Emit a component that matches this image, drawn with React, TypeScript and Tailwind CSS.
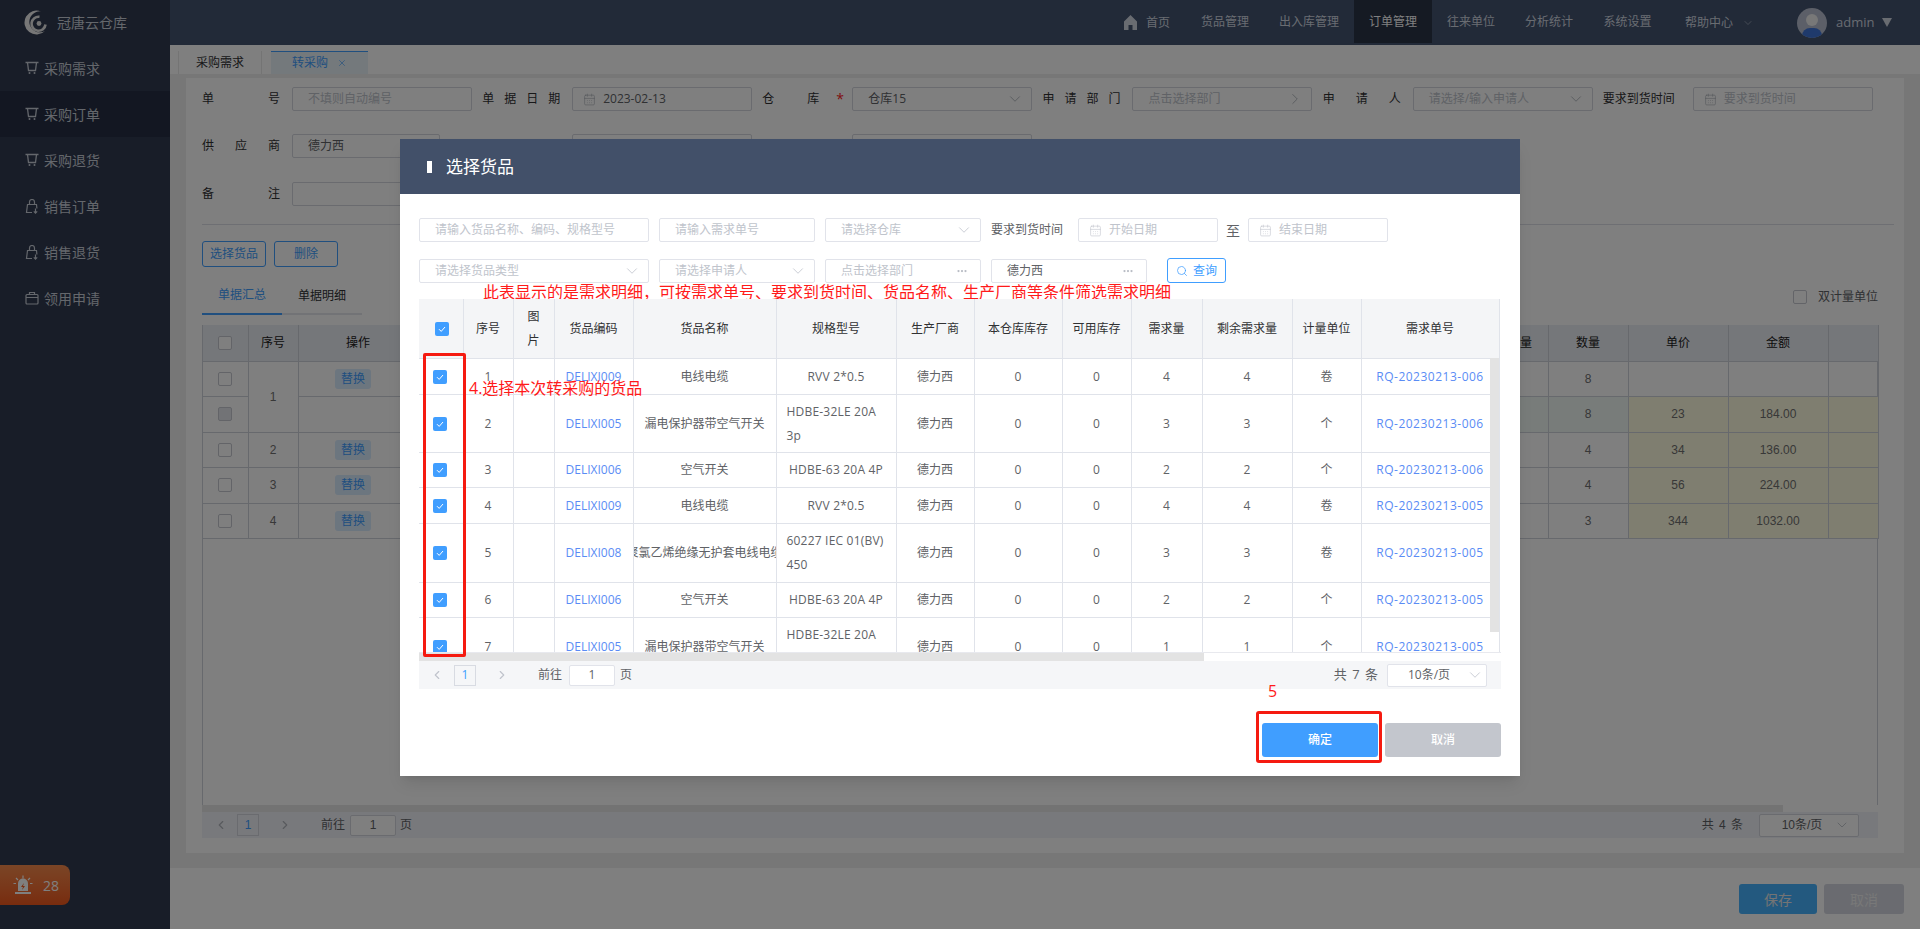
import { CalendarDays, ChevronDown, ChevronLeft, ChevronRight, MoreHorizontal, Search, X } from "lucide-react";
import type { ReactNode } from "react";

const SIDE = [
  { label: "采购需求", icon: "cart" },
  { label: "采购订单", icon: "cart", active: true },
  { label: "采购退货", icon: "cart" },
  { label: "销售订单", icon: "bag" },
  { label: "销售退货", icon: "bag" },
  { label: "领用申请", icon: "case" },
];

const NAV = [
  { label: "货品管理", w: "w-[78px]" },
  { label: "出入库管理", w: "w-[90px]" },
  { label: "订单管理", w: "w-[78px]", active: true },
  { label: "往来单位", w: "w-[78px]" },
  { label: "分析统计", w: "w-[78px]" },
  { label: "系统设置", w: "w-[79px]" },
];

const GOODS = [
  { no: 1, code: "DELIXI009", name: "电线电缆", spec: "RVV 2*0.5", need: 4, unit: "卷", bill: "RQ-20230213-006", h: "h-[36px]" },
  { no: 2, code: "DELIXI005", name: "漏电保护器带空气开关", spec: "HDBE-32LE 20A 3p", need: 3, unit: "个", bill: "RQ-20230213-006", h: "h-[58px]" },
  { no: 3, code: "DELIXI006", name: "空气开关", spec: "HDBE-63 20A 4P", need: 2, unit: "个", bill: "RQ-20230213-006", h: "h-[35px]" },
  { no: 4, code: "DELIXI009", name: "电线电缆", spec: "RVV 2*0.5", need: 4, unit: "卷", bill: "RQ-20230213-005", h: "h-[36px]" },
  { no: 5, code: "DELIXI008", name: "聚氯乙烯绝缘无护套电线电缆", spec: "60227 IEC 01(BV) 450", need: 3, unit: "卷", bill: "RQ-20230213-005", h: "h-[59px]" },
  { no: 6, code: "DELIXI006", name: "空气开关", spec: "HDBE-63 20A 4P", need: 2, unit: "个", bill: "RQ-20230213-005", h: "h-[35px]" },
  { no: 7, code: "DELIXI005", name: "漏电保护器带空气开关", spec: "HDBE-32LE 20A 3p", need: 1, unit: "个", bill: "RQ-20230213-005", h: "h-[59px]" },
];

const GOODS_HEAD = ["序号", "图片", "货品编码", "货品名称", "规格型号", "生产厂商", "本仓库库存", "可用库存", "需求量", "剩余需求量", "计量单位", "需求单号"];

function SideIcon({ kind }: { kind: string }) {
  if (kind === "cart") {
    return (
      <svg width="14" height="14" viewBox="0 0 14 14" fill="none" stroke="currentColor" strokeWidth="1.3">
        <path d="M0.5 1.500h13M2.500 1.500l1 8h7l1-8" />
        <circle cx="4.500" cy="12" r="1" fill="currentColor" stroke="none" />
        <circle cx="9.500" cy="12" r="1" fill="currentColor" stroke="none" />
      </svg>
    );
  }
  if (kind === "bag") {
    return (
      <svg width="14" height="15" viewBox="0 0 14 15" fill="none" stroke="currentColor" strokeWidth="1.2">
        <path d="M7 13.500H1.500l1-8h9l.4 4M4.500 5.500V3a2.500 2.500 0 015 0v2.500" />
        <path d="M10.500 9.500v4.500M8.800 12.400l1.700 1.700 1.700-1.700" />
      </svg>
    );
  }
  return (
    <svg width="14" height="14" viewBox="0 0 14 14" fill="none" stroke="currentColor" strokeWidth="1.2">
      <rect x="1" y="3.500" width="12" height="9.500" rx="1" />
      <path d="M1 6.500h12M4.500 3.500V1.500h5v2" />
    </svg>
  );
}

function Logo() {
  return (
    <svg width="25" height="25" viewBox="0 0 25 25">
      <path fill="#eeeeee" d="M17 1.400A12 12 0 1 0 21 21A10.500 10.500 0 1 1 17 1.400Z" />
      <path d="M21.500 14.500A7 7 0 1 1 15.500 6.800" fill="none" stroke="#e4e4e4" strokeWidth="2.600" />
      <circle cx="15" cy="13.500" r="2.400" fill="#e4e4e4" />
    </svg>
  );
}

function Sidebar() {
  return (
    <aside className="relative flex h-full w-[170px] shrink-0 flex-col bg-[#303a50] text-[14px] text-[#c8ced8]">
      <div className="flex h-[45px] items-center pl-[24px]">
        <Logo />
        <span className="ml-[8px]">冠唐云仓库</span>
      </div>
      {SIDE.map((s) => (
        <div key={s.label} className={`flex h-[46px] items-center pl-[25px] ${s.active ? "bg-[#262e44]" : ""}`}>
          <SideIcon kind={s.icon} />
          <span className="ml-[5px]">{s.label}</span>
        </div>
      ))}
      <div className="absolute left-0 top-[865px] flex h-[40px] w-[70px] items-center rounded-r-[8px] bg-gradient-to-b from-[#f58a4c] to-[#f0581c] pl-[13px] text-white">
        <svg width="20" height="20" viewBox="0 0 20 20" fill="#fff">
          <path d="M5 8.500a5 5 0 0110 0V16H5Z" />
          <path d="M2 17h16v2H2Z" />
          <path d="M10 .5v3M3 3l2 2M17 3l-2 2M.5 8.500h2.500M17 8.500h2.500" stroke="#fff" strokeWidth="1.2" />
          <path d="M11 8l-3 4h2l-1 3 3-4h-2Z" fill="#f0581c" />
        </svg>
        <span className="ml-[10px] text-[14px]">28</span>
      </div>
    </aside>
  );
}

function Header() {
  return (
    <header className="flex h-[45px] shrink-0 items-start bg-[#445470] pl-[953px] text-[12px] text-[#d2d8e2]">
      <div className="flex h-[45px] w-[63px] items-center">
        <svg width="15" height="15" viewBox="0 0 15 15" fill="currentColor">
          <path d="M7.500 0L1 6.500V15h4.500v-5h4v5H14V6.500Z" />
        </svg>
        <span className="ml-[8px]">首页</span>
      </div>
      {NAV.map((n) => (
        <div key={n.label} className={`flex h-[43px] items-center justify-center ${n.w} ${n.active ? "bg-[#2a3446] text-white" : ""}`}>
          {n.label}
        </div>
      ))}
      <div className="flex h-[45px] items-center pl-[18px]">
        帮助中心
        <ChevronDown size={12} strokeWidth={1} className="ml-[9px]" />
      </div>
      <div className="ml-[43px] flex h-[45px] items-center">
        <div className="relative h-[30px] w-[30px] overflow-hidden rounded-full bg-[#b8bfd0]">
          <div className="absolute left-[9px] top-[6px] h-[12px] w-[12px] rounded-full bg-[#f0f0f0]" />
          <div className="absolute left-[5px] top-[20px] h-[16px] w-[20px] rounded-full bg-[#3f74d8]" />
        </div>
        <span className="ml-[9px] text-[13px]">admin</span>
        <span className="ml-[8px] h-0 w-0 border-x-[5px] border-t-[9px] border-x-transparent border-t-[#d2d8e2]" />
      </div>
    </header>
  );
}

function Field({ label, children }: { label: ReactNode; children: ReactNode }) {
  return (
    <div className="flex items-center">
      <div className="w-[78px] shrink-0 text-[12px] text-[#303133]">{label}</div>
      <div className="ml-[12px]">{children}</div>
    </div>
  );
}

const spread = "[text-align:justify] [text-align-last:justify]";

function BgInput({ text, dark, icon, right, w }: { text: string; dark?: boolean; icon?: boolean; right?: ReactNode; w?: string }) {
  return (
    <div className={`flex h-[24px] items-center rounded-[2px] border border-[#d4d7de] text-[12px] ${w ?? "w-[180px]"} ${icon ? "pl-[10px]" : "pl-[15px]"} pr-[9px]`}>
      {icon && <CalendarDays size={13} strokeWidth={1.1} className="mr-[7px] text-[#a8acb4]" />}
      <span className={`flex-1 ${dark ? "text-[#606266]" : "text-[#c0c4cc]"}`}>{text}</span>
      {right}
    </div>
  );
}

function BgTable() {
  const rows = [
    { check: false, no: "1", op: true, qty: "8", price: "", sum: "", h: "h-[35px]" },
    { check: true, no: "", op: false, qty: "8", price: "23", sum: "184.00", h: "h-[36px]" },
    { check: false, no: "2", op: true, qty: "4", price: "34", sum: "136.00", h: "h-[35px]" },
    { check: false, no: "3", op: true, qty: "4", price: "56", sum: "224.00", h: "h-[36px]" },
    { check: false, no: "4", op: true, qty: "3", price: "344", sum: "1032.00", h: "h-[35px]" },
  ];
  const cell = "border-r border-b border-[#cfd2da] p-0 text-center";
  return (
    <div className="mt-[10px] flex h-[513px] w-[1676px] flex-col font-['Liberation_Sans','Noto_Sans_CJK_SC',sans-serif] text-[12px] text-[#707070]">
      <div className="h-[480px] border-x border-[#cfd2da]">
        <table className="w-[1675px] table-fixed border-collapse">
          <colgroup>
            <col className="w-[45px]" />
            <col className="w-[50px]" />
            <col className="w-[110px]" />
            <col className="w-[1060px]" />
            <col className="w-[80px]" />
            <col className="w-[80px]" />
            <col className="w-[100px]" />
            <col className="w-[100px]" />
            <col className="w-[50px]" />
          </colgroup>
          <thead>
            <tr className="h-[36px] bg-[#ebeef5] text-[#202020]">
              <th className={`${cell} font-normal`}>
                <span className="mx-auto block h-[14px] w-[14px] rounded-[2px] border border-[#c6c9d0] bg-white" />
              </th>
              <th className={`${cell} font-normal`}>序号</th>
              <th className={`${cell} pl-[10px] font-normal`}>操作</th>
              <th className={`${cell} font-normal`} />
              <th className={`${cell} font-normal`}>采购数量</th>
              <th className={`${cell} font-normal`}>数量</th>
              <th className={`${cell} font-normal`}>单价</th>
              <th className={`${cell} font-normal`}>金额</th>
              <th className={`${cell} font-normal`} />
            </tr>
          </thead>
          <tbody>
            {rows.map((r, i) => {
              const tint = i === 0 ? "" : "bg-[#fffde0]";
              const green = i === 1 ? "bg-[#f0f9f4]" : "";
              return (
                <tr key={i} className={r.h}>
                  <td className={cell}>
                    <span className={`mx-auto block h-[14px] w-[14px] rounded-[2px] border border-[#c6c9d0] ${r.check ? "bg-[#e4e6ec]" : "bg-white"}`} />
                  </td>
                  {i !== 1 && (
                    <td className={cell} rowSpan={i === 0 ? 2 : 1}>
                      {r.no}
                    </td>
                  )}
                  <td className={cell}>
                    {r.op && (
                      <span className="mx-auto flex h-[20px] w-[36px] items-center justify-center rounded-[3px] bg-[#d9ecff] text-[#409eff]">替换</span>
                    )}
                  </td>
                  <td className={cell} />
                  <td className={`${cell} ${green}`} />
                  <td className={`${cell} ${green}`}>{r.qty}</td>
                  <td className={`${cell} ${tint}`}>{r.price}</td>
                  <td className={`${cell} ${tint}`}>{r.sum}</td>
                  <td className={`${cell} ${tint}`} />
                </tr>
              );
            })}
          </tbody>
        </table>
      </div>
      <div className="h-[7px] w-[1581px] shrink-0 bg-[#e6e6e6]" />
      <div className="flex h-[26px] shrink-0 items-center bg-[#f1f3f8] pl-[12px] pr-[19px] text-[#606266]">
        <ChevronLeft size={14} strokeWidth={2} className="text-[#b0b4bc]" />
        <span className="ml-[9px] flex h-[22px] w-[22px] items-center justify-center border border-[#d4d7de] text-[#409eff]">1</span>
        <ChevronRight size={14} strokeWidth={2} className="ml-[19px] text-[#b0b4bc]" />
        <span className="ml-[29px]">前往</span>
        <span className="ml-[5px] flex h-[21px] w-[46px] items-center justify-center rounded-[2px] border border-[#d4d7de] bg-white">1</span>
        <span className="ml-[4px]">页</span>
        <span className="ml-auto tracking-[1px]">共 4 条</span>
        <span className="ml-[15px] flex h-[23px] w-[100px] items-center justify-center rounded-[2px] border border-[#d4d7de] bg-white pr-[8px] pl-[10px]">
          <span className="flex-1 text-center">10条/页</span>
          <ChevronDown size={16} strokeWidth={1.1} className="text-[#b0b4bc]" />
        </span>
      </div>
    </div>
  );
}

function Page() {
  const chevron = <ChevronDown size={18} strokeWidth={1.1} className="-mr-[2px] text-[#a8acb4]" />;
  return (
    <div className="flex min-w-0 flex-1 flex-col">
      <Header />
      <div className="flex h-[29px] shrink-0 items-end bg-white pl-[8px] text-[12px]">
        <div className="flex h-[23px] w-[84px] items-center justify-center border-x border-[#e8e8e8] text-[#303133]">采购需求</div>
        <div className="ml-[9px] flex h-[23px] w-[97px] items-center border-t border-[#409eff] bg-[#e9f2f8] pl-[21px] text-[#409eff]">
          转采购
          <X size={10} strokeWidth={1.5} className="ml-[9px]" />
        </div>
      </div>
      <main className="flex min-h-0 flex-1 flex-col bg-[#eeeeee] pl-[16px] pr-[16px] pt-[4px] pb-[15px]">
        <div className="min-h-0 flex-1 bg-white pl-[16px] pr-[10px] pt-[9px]">
          <div className="grid w-[1681px] grid-cols-6">
            <Field label={<div className={spread}>单 号</div>}>
              <BgInput text="不填则自动编号" />
            </Field>
            <Field label={<div className={spread}>单 据 日 期</div>}>
              <BgInput icon dark text="2023-02-13" />
            </Field>
            <Field
              label={
                <div className="flex">
                  <span>仓</span>
                  <span className="ml-[33px]">库</span>
                  <span className="ml-[17px] text-[14px] leading-[18px] text-[#ff2020]">*</span>
                </div>
              }
            >
              <BgInput dark text="仓库15" right={chevron} />
            </Field>
            <Field label={<div className={spread}>申 请 部 门</div>}>
              <BgInput text="点击选择部门" right={<ChevronRight size={18} strokeWidth={1.1} className="-mr-[2px] text-[#a8acb4]" />} />
            </Field>
            <Field label={<div className={spread}>申 请 人</div>}>
              <BgInput text="请选择/输入申请人" right={chevron} />
            </Field>
            <Field label="要求到货时间">
              <BgInput icon text="要求到货时间" />
            </Field>
          </div>
          <div className="mt-[23px] grid w-[1681px] grid-cols-6">
            <Field label={<div className={spread}>供 应 商</div>}>
              <BgInput dark text="德力西" w="w-[148px]" />
            </Field>
            <Field label="">
              <BgInput text="" />
            </Field>
            <Field label="">
              <BgInput text="" />
            </Field>
          </div>
          <div className="mt-[24px] grid w-[1681px] grid-cols-6">
            <Field label={<div className={spread}>备 注</div>}>
              <BgInput text="" />
            </Field>
          </div>
          <div className="mt-[18px] h-px bg-[#dcdfe6]" />
          <div className="mt-[16px] flex gap-[8px] text-[12px] text-[#409eff]">
            <button className="h-[26px] w-[64px] rounded-[3px] border border-[#409eff]">选择货品</button>
            <button className="h-[26px] w-[64px] rounded-[3px] border border-[#409eff]">删除</button>
          </div>
          <div className="flex h-[48px] items-end justify-between text-[12px]">
            <div className="flex w-[160px] border-b-2 border-[#e4e7ed]">
              <div className="-mb-[2px] flex h-[35px] w-[80px] items-center justify-center border-b-2 border-[#409eff] pb-[4px] text-[#409eff]">单据汇总</div>
              <div className="flex h-[33px] w-[80px] items-center justify-center pb-[2px] text-[#303133]">单据明细</div>
            </div>
            <div className="mb-[9px] mr-[16px] flex items-center text-[#606266]">
              <span className="h-[14px] w-[14px] rounded-[2px] border border-[#c6c9d0]" />
              <span className="ml-[11px]">双计量单位</span>
            </div>
          </div>
          <BgTable />
        </div>
      </main>
      <footer className="flex h-[61px] shrink-0 items-start justify-end gap-[7px] bg-white pr-[16px] pt-[16px] text-[14px]">
        <button className="h-[30px] w-[78px] rounded-[3px] bg-[#46b2ff] text-[#e8e8e8]">保存</button>
        <button className="h-[30px] w-[80px] rounded-[3px] bg-[#d4d7e0] text-[#f0f0f0]">取消</button>
      </footer>
    </div>
  );
}

function DlgInput({ text, w, right, icon, dark }: { text: string; w: string; right?: ReactNode; icon?: boolean; dark?: boolean }) {
  return (
    <div className={`flex h-[24px] shrink-0 items-center rounded-[2px] border border-[#e1e3ea] ${w} ${icon ? "pl-[10px]" : "pl-[15px]"} pr-[9px]`}>
      {icon && <CalendarDays size={13} strokeWidth={1.1} className="mr-[7px] text-[#c0c4cc]" />}
      <span className={`flex-1 ${dark ? "text-[#606266]" : "text-[#c0c4cc]"}`}>{text}</span>
      {right}
    </div>
  );
}

function Check({ className }: { className: string }) {
  return (
    <span className={`flex h-[14px] w-[14px] items-center justify-center rounded-[2px] bg-[#409eff] ${className}`}>
      <svg width="10" height="10" viewBox="0 0 10 10" fill="none" stroke="#fff" strokeWidth="1">
        <path d="M2 5.200l2.200 2.200L8 3" />
      </svg>
    </span>
  );
}

function GoodsTable() {
  const td = "border-r border-b border-[#e0e3ea] p-0 pt-[1px] text-center";
  return (
    <div className="relative h-[354px] w-[1082px] overflow-hidden border-b border-[#e8e9ee] bg-white">
      <table className="w-[1080px] table-fixed border-collapse">
        <colgroup>
          <col className="w-[44px]" />
          <col className="w-[50px]" />
          <col className="w-[41px]" />
          <col className="w-[79px]" />
          <col className="w-[143px]" />
          <col className="w-[120px]" />
          <col className="w-[78px]" />
          <col className="w-[88px]" />
          <col className="w-[69px]" />
          <col className="w-[71px]" />
          <col className="w-[90px]" />
          <col className="w-[69px]" />
          <col className="w-[138px]" />
        </colgroup>
        <thead>
          <tr className="h-[59px] bg-[#f4f5f7] text-[#303133]">
            <th className={`${td} font-normal`}>
              <Check className="mx-auto translate-x-[1px]" />
            </th>
            {GOODS_HEAD.map((h) => (
              <th key={h} className={`${td} font-normal ${h === "图片" ? "px-[13px] leading-[24px]" : ""}`}>
                {h}
              </th>
            ))}
          </tr>
        </thead>
        <tbody className="text-[#606266]">
          {GOODS.map((g) => (
            <tr key={g.no} className={g.h}>
              <td className={td}>
                <Check className="mx-auto -translate-x-[1px]" />
              </td>
              <td className={td}>{g.no}</td>
              <td className={td} />
              <td className={`${td} text-[#5a8cf5]`}>{g.code}</td>
              <td className={td}>
                <div className="flex justify-center overflow-hidden px-[1px]">
                  <span className="shrink-0 whitespace-nowrap">{g.name}</span>
                </div>
              </td>
              <td className={`${td} px-[10px] leading-[24px] tracking-[0.2px]`}>
                <span className="inline-block text-left">{g.spec}</span>
              </td>
              <td className={td}>德力西</td>
              <td className={td}>0</td>
              <td className={td}>0</td>
              <td className={td}>{g.need}</td>
              <td className={td}>{g.need}</td>
              <td className={td}>{g.unit}</td>
              <td className={`${td} tracking-[0.5px] text-[#5a8cf5]`}>{g.bill}</td>
            </tr>
          ))}
        </tbody>
      </table>
      <div className="absolute left-[1071px] top-[59px] h-[274px] w-[9px] bg-[#e3e3e3]" />
    </div>
  );
}

function Dialog() {
  const sel = <ChevronDown size={18} strokeWidth={1.1} className="-mr-[2px] text-[#c0c4cc]" />;
  const more = <MoreHorizontal size={12} strokeWidth={2.5} className="mr-[3px] text-[#b8bcc4]" />;
  return (
    <div className="absolute left-[400px] top-[139px] z-20 flex h-[637px] w-[1120px] flex-col bg-white text-[12px] shadow-lg">
      <div className="flex h-[55px] shrink-0 items-center bg-[#425069] pl-[27px] text-white">
        <span className="h-[12px] w-[5px] bg-white" />
        <span className="ml-[14px] text-[17px]">选择货品</span>
      </div>
      {/* sits under the table, whose header clips the bottom of the glyphs */}
      <div className="absolute left-[83px] top-[143px] whitespace-nowrap text-[16px] leading-[20px] text-[#ff1a1a]">
        此表显示的是需求明细，可按需求单号、要求到货时间、货品名称、生产厂商等条件筛选需求明细
      </div>
      <div className="flex flex-1 flex-col px-[19px] pt-[24px]">
        <div className="flex items-center">
          <DlgInput text="请输入货品名称、编码、规格型号" w="w-[230px]" />
          <DlgInput text="请输入需求单号" w="ml-[10px] w-[156px]" />
          <DlgInput text="请选择仓库" w="ml-[10px] w-[156px]" right={sel} />
          <span className="ml-[10px] w-[87px] shrink-0 text-[#606266]">要求到货时间</span>
          <DlgInput icon text="开始日期" w="w-[140px]" />
          <span className="ml-[8px] w-[22px] shrink-0 text-[14px] text-[#606266]">至</span>
          <DlgInput icon text="结束日期" w="w-[140px]" />
        </div>
        <div className="mt-[16px] flex items-center">
          <DlgInput text="请选择货品类型" w="w-[230px]" right={sel} />
          <DlgInput text="请选择申请人" w="ml-[10px] w-[156px]" right={sel} />
          <DlgInput text="点击选择部门" w="ml-[10px] w-[156px]" right={more} />
          <DlgInput dark text="德力西" w="ml-[10px] w-[156px]" right={more} />
          <button className="ml-[20px] flex h-[25px] w-[59px] items-center justify-center rounded-[3px] border border-[#409eff] text-[#409eff]">
            <Search size={12} strokeWidth={1.5} className="mr-[5px]" />
            查询
          </button>
        </div>
        <div className="mt-[16px]">
          <GoodsTable />
          <div className="h-[8px] w-[785px] bg-[#e3e3e3]" />
          <div className="flex h-[28px] w-[1082px] items-center bg-[#f5f6f8] pl-[11px] pr-[14px] text-[#606266]">
            <ChevronLeft size={14} strokeWidth={2} className="text-[#c0c4cc]" />
            <span className="ml-[10px] flex h-[21px] w-[22px] items-center justify-center border border-[#d8dbe2] text-[#409eff]">1</span>
            <ChevronRight size={14} strokeWidth={2} className="ml-[19px] text-[#c0c4cc]" />
            <span className="ml-[29px]">前往</span>
            <span className="ml-[7px] flex h-[21px] w-[46px] items-center justify-center rounded-[2px] border border-[#e1e3ea] bg-white">1</span>
            <span className="ml-[5px]">页</span>
            <span className="ml-auto text-[13px] tracking-[1px]">共 7 条</span>
            <span className="ml-[8px] flex h-[23px] w-[100px] items-center rounded-[2px] border border-[#e1e3ea] bg-white pl-[20px] pr-[4px]">
              <span className="flex-1">10条/页</span>
              {sel}
            </span>
          </div>
        </div>
        <div className="mt-[34px] flex w-[1082px] justify-end gap-[7px] text-white">
          <button className="h-[34px] w-[116px] rounded-[3px] bg-[#409eff] font-medium">确定</button>
          <button className="h-[34px] w-[116px] rounded-[3px] bg-[#c3c6cd] font-medium">取消</button>
        </div>
      </div>
      {/* annotations drawn over the screenshot */}
      <div className="absolute left-[23px] top-[214px] h-[304px] w-[43px] rounded-[2px] border-[3px] border-[#f51a10]" />
      <div className="absolute left-[69px] top-[239px] whitespace-nowrap text-[16px] leading-[20px] text-[#ff1a1a]">4.选择本次转采购的货品</div>
      <div className="absolute left-[856px] top-[572px] h-[52px] w-[126px] rounded-[3px] border-[3px] border-[#f51a10]" />
      <div className="absolute left-[868px] top-[542px] text-[16px] leading-[20px] text-[#ff1a1a]">5</div>
    </div>
  );
}

export default function App() {
  return (
    <div className="relative flex h-[929px] w-[1920px] overflow-hidden font-['Open_Sans','Noto_Sans_CJK_SC',sans-serif]">
      <Sidebar />
      <Page />
      <div className="absolute inset-0 z-10 bg-black/50" />
      <Dialog />
    </div>
  );
}
